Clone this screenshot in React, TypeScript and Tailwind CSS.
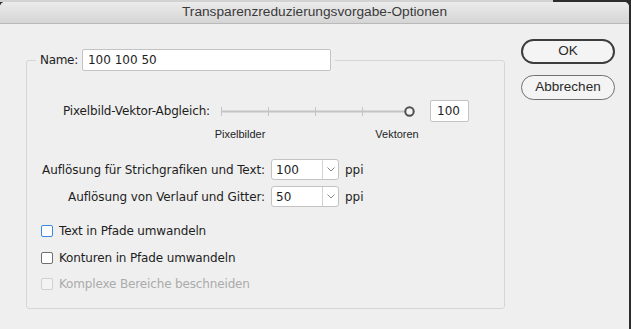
import React from "react";

const ui = { fontFamily: '"DejaVu Sans", "Liberation Sans", sans-serif' };
const sys = { fontFamily: '"Liberation Sans", Arial, sans-serif' };

function Select({ value }: { value: string }) {
  return (
    <div className="flex h-[21px] w-[68px] items-stretch rounded-[3px] border border-[#c3c3c3] bg-white">
      <div className="flex w-[50px] items-center pl-[4px] text-[12px] text-[#1e1e1e]">{value}</div>
      <div className="flex flex-1 items-center justify-center border-l border-[#d2d2d2]">
        <svg width="8" height="5" viewBox="0 0 8 5">
          <polyline points="0.5,0.5 4,4 7.5,0.5" fill="none" stroke="#8a8a8a" strokeWidth="1" />
        </svg>
      </div>
    </div>
  );
}

function Check({ label, focus, disabled }: { label: string; focus?: boolean; disabled?: boolean }) {
  const box = disabled
    ? "border-[#d0d0d0] bg-[#f3f3f3]"
    : focus
    ? "border-[#3b86e0] bg-white"
    : "border-[#6f6f6f] bg-white";
  return (
    <div className="flex h-[16px] items-center pl-[14px]">
      <div className={`h-[12px] w-[12px] rounded-[2px] border ${box}`} />
      <span className={`ml-[6px] text-[12px] tracking-[-0.15px] ${disabled ? "text-[#ababab]" : "text-[#1e1e1e]"}`}>
        {label}
      </span>
    </div>
  );
}

export default function App() {
  return (
    <div className="flex h-[329px] w-[631px] flex-col overflow-hidden bg-[#2c2c2c]" style={ui}>
      <div className="flex h-[2px]">
        <div className="w-[553px] bg-[#d2d2d2]" />
        <div className="flex-1 bg-[#2c2c2c]" />
      </div>
      <div className="flex flex-1">
        <div className="flex w-[629px] flex-col overflow-hidden rounded-t-[5px] bg-[#efefef]">
          <div
            className="flex h-[22px] items-center justify-center border-b border-[#b9b9b9] bg-gradient-to-b from-[#ebebeb] to-[#d5d5d5] text-[13.7px] text-[#3a3a3a]"
            style={sys}
          >
            Transparenzreduzierungsvorgabe-Optionen
          </div>
          <div className="flex flex-1">
            <fieldset className="ml-[26px] mt-[25px] h-fit w-[479px] rounded-[3px] border border-[#d6d6d6] pb-[16px]">
              <legend className="ml-[9px] px-[4px]">
                <div className="flex items-center">
                  <span className="text-[12px] tracking-[-0.3px] text-[#1e1e1e]">Name:</span>
                  <div className="ml-[4px] flex h-[22px] w-[249px] items-center rounded-[2px] border border-[#c3c3c3] bg-white pl-[5px] text-[12px] text-[#1e1e1e]">
                    100 100 50
                  </div>
                </div>
              </legend>

              <div className="mt-[29px] flex h-[22px] items-center">
                <div className="w-[183px] text-right text-[12px] tracking-[-0.15px] text-[#1e1e1e]">
                  Pixelbild-Vektor-Abgleich:
                </div>
                <svg width="206" height="22" viewBox="0 0 206 22">
                  <line x1="11" y1="11.5" x2="195" y2="11.5" stroke="#c4c4c4" strokeWidth="2" />
                  <line x1="11.5" y1="7" x2="11.5" y2="16" stroke="#c4c4c4" strokeWidth="1" />
                  <line x1="58.5" y1="7" x2="58.5" y2="16" stroke="#c4c4c4" strokeWidth="1" />
                  <line x1="105.5" y1="7" x2="105.5" y2="16" stroke="#c4c4c4" strokeWidth="1" />
                  <line x1="152.5" y1="7" x2="152.5" y2="16" stroke="#c4c4c4" strokeWidth="1" />
                  <circle cx="199.5" cy="11.5" r="4.2" fill="#f4f4f4" stroke="#4f4f4f" strokeWidth="2" />
                </svg>
                <div className="ml-[14px] flex h-[22px] w-[39px] items-center rounded-[2px] border border-[#c3c3c3] bg-white pl-[6px] text-[12px] text-[#1e1e1e]">
                  100
                </div>
              </div>

              <div className="mt-[5px] flex h-[14px] items-center pl-[163px] text-[11px] text-[#1e1e1e]" style={sys}>
                <span className="w-[100px] text-center">Pixelbilder</span>
                <span className="ml-[57px] w-[100px] text-center">Vektoren</span>
              </div>

              <div className="mt-[18px] flex items-center">
                <div className="w-[238px] text-right text-[12px] tracking-[-0.1px] text-[#1e1e1e]">
                  Auflösung für Strichgrafiken und Text:
                </div>
                <div className="ml-[6px]">
                  <Select value="100" />
                </div>
                <span className="ml-[6px] text-[12px] text-[#1e1e1e]">ppi</span>
              </div>

              <div className="mt-[6px] flex items-center">
                <div className="w-[238px] text-right text-[12px] tracking-[-0.1px] text-[#1e1e1e]">
                  Auflösung von Verlauf und Gitter:
                </div>
                <div className="ml-[6px]">
                  <Select value="50" />
                </div>
                <span className="ml-[6px] text-[12px] text-[#1e1e1e]">ppi</span>
              </div>

              <div className="mt-[16px]">
                <Check label="Text in Pfade umwandeln" focus />
              </div>
              <div className="mt-[11px]">
                <Check label="Konturen in Pfade umwandeln" />
              </div>
              <div className="mt-[10px]">
                <Check label="Komplexe Bereiche beschneiden" disabled />
              </div>
            </fieldset>

            <div className="ml-[16px] mt-[15px] flex flex-col" style={sys}>
              <button className="flex h-[25px] w-[94px] items-center justify-center rounded-full border-2 border-[#3c3c3c] bg-[#f4f4f4] text-[13.5px] text-[#2a2a2a]">
                OK
              </button>
              <button className="mt-[11px] flex h-[25px] w-[94px] items-center justify-center rounded-full border border-[#707070] bg-[#f4f4f4] text-[13.5px] text-[#2a2a2a]">
                Abbrechen
              </button>
            </div>
          </div>
        </div>
      </div>
    </div>
  );
}
